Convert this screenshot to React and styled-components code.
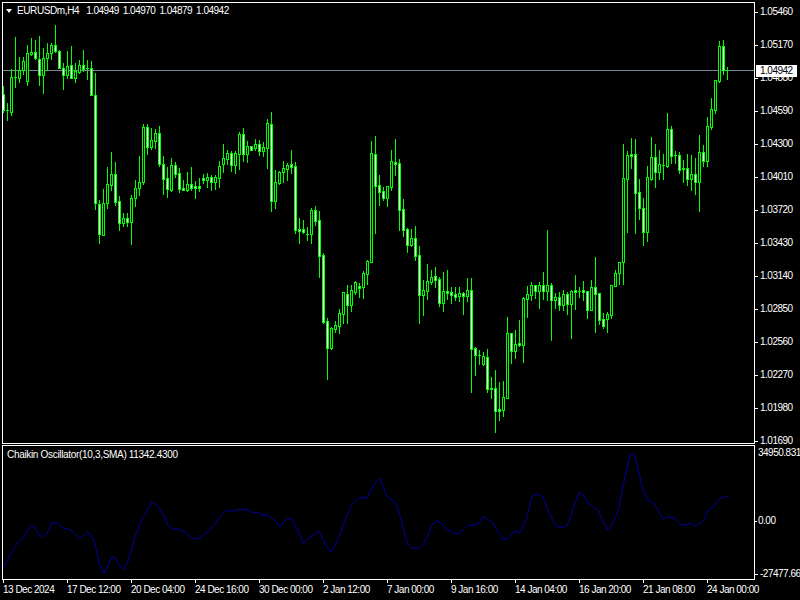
import React from "react";
import styled, { createGlobalStyle } from "styled-components";

// [high, bodyTop, bodyBottom, low, filled] in page pixels, one bar every 4px from x=3
const BARS = [
  [86,94,110,112,1],[103,110,110,120,0],[69,77,112,115,0],[37,77,77,87,0],[57,70,78,82,0],[57,61,70,74,0],
  [45,53,81,85,0],[38,52,54,55,0],[40,52,58,59,1],[36,59,75,85,1],[48,58,75,93,0],[43,53,58,70,0],
  [43,45,53,59,0],[25,45,51,52,1],[50,51,68,68,1],[63,68,75,89,1],[51,66,75,78,0],[46,65,78,78,1],
  [63,71,78,82,0],[60,65,72,73,0],[50,65,69,71,1],[60,68,68,79,0],[61,68,95,95,1],[73,95,203,209,1],
  [200,204,234,243,1],[189,203,235,235,0],[167,184,203,208,0],[152,174,185,190,0],[162,174,202,205,1],
  [196,201,223,230,1],[213,218,223,226,0],[213,218,222,226,1],[195,198,222,244,0],[180,188,198,206,0],
  [156,182,188,195,0],[124,127,182,184,0],[124,127,147,154,1],[128,140,147,149,0],[129,133,141,148,0],
  [126,133,164,166,1],[156,164,179,194,1],[167,178,189,197,1],[158,165,190,191,0],[162,165,174,177,1],
  [168,173,189,192,1],[180,188,190,190,1],[172,184,190,191,0],[167,184,188,190,1],[181,186,188,198,1],
  [178,186,188,191,1],[174,178,180,183,1],[173,177,180,187,0],[175,177,182,190,1],[175,177,182,189,0],
  [161,166,178,187,0],[144,158,164,172,0],[150,153,159,164,0],[151,153,165,171,1],[151,153,165,173,0],
  [132,134,154,169,0],[128,134,154,161,1],[141,146,154,162,0],[146,146,150,150,1],[139,144,148,150,0],
  [140,144,151,155,1],[142,147,151,156,0],[119,123,148,168,0],[112,124,201,211,1],[170,182,201,208,0],
  [171,172,183,184,0],[161,168,172,182,0],[163,165,169,180,0],[150,164,167,173,1],[162,166,230,233,1],
  [218,229,231,243,1],[220,229,232,233,1],[227,234,234,240,0],[208,210,234,243,0],[206,210,221,225,1],
  [211,220,256,277,1],[253,255,322,323,1],[318,321,348,379,1],[327,328,348,349,0],[321,325,329,332,0],
  [309,313,326,333,0],[292,292,314,323,0],[285,294,305,323,1],[285,290,305,311,0],[281,282,292,294,0],
  [283,286,288,297,1],[271,273,287,298,0],[260,261,274,284,0],[141,153,262,262,0],[136,154,186,233,1],
  [175,185,192,205,1],[187,191,198,200,1],[186,186,198,206,0],[150,161,187,190,0],[139,162,164,175,1],
  [159,163,210,230,1],[199,209,230,236,1],[228,229,245,252,1],[229,238,245,246,0],[226,238,256,260,1],
  [246,255,295,323,1],[280,290,295,315,0],[264,281,291,299,0],[270,277,282,284,0],[267,276,280,287,1],
  [277,279,303,306,1],[272,291,303,311,0],[270,291,293,299,1],[287,292,295,303,1],[287,294,297,300,1],
  [287,293,296,301,0],[292,293,296,314,1],[278,290,296,301,0],[278,290,349,392,1],[347,348,355,375,1],
  [350,355,355,364,0],[352,356,364,365,0],[349,357,389,392,1],[377,388,389,398,0],[370,388,411,432,1],
  [382,409,411,420,1],[381,397,410,416,0],[317,333,398,398,0],[333,333,351,363,1],[330,344,351,358,0],
  [320,343,345,346,1],[297,298,345,362,0],[286,294,299,317,0],[282,285,295,300,0],[285,285,291,298,1],
  [282,285,291,308,0],[272,285,291,299,1],[230,285,291,300,0],[283,285,300,340,1],[293,297,300,308,0],
  [292,297,305,310,1],[290,294,305,310,0],[292,294,304,314,1],[290,291,304,338,0],[275,290,292,309,1],
  [287,291,291,297,0],[281,290,292,300,1],[291,291,310,318,1],[280,287,310,310,0],[257,287,294,332,1],
  [293,293,320,324,1],[313,319,326,328,1],[312,314,319,332,0],[285,285,315,318,0],[270,273,286,286,0],
  [262,262,273,284,0],[144,178,262,284,0],[151,155,179,232,0],[138,154,156,168,1],[139,154,193,233,1],
  [179,192,208,219,1],[198,208,232,245,1],[166,177,232,241,0],[137,157,179,180,0],[144,157,172,187,1],
  [150,164,172,179,0],[154,165,165,179,0],[113,129,166,167,0],[126,129,156,163,1],[151,155,155,163,0],
  [152,155,170,173,1],[160,168,169,182,1],[154,168,179,185,1],[155,174,179,190,0],[158,174,182,194,1],
  [135,152,182,211,0],[145,152,161,166,1],[117,126,161,166,0],[98,109,127,129,0],[80,80,110,113,0],
  [41,46,81,82,0],[40,46,70,74,1],[67,70,70,79,0],
];

// oscillator line, traced per stretch: x offset + x/3, 440 + y/3
const traced = (left, points) =>
  points.map(([x, y]) => `${(left + x / 3).toFixed(1)},${(440 + y / 3).toFixed(1)}`);

const OSCILLATOR = [
  ...traced(0, [[10,385],[25,355],[40,328],[55,305],[70,295],[82,272],[95,257],[105,262],[118,285],[128,290],[142,280],[155,248],[170,248],[190,265],[205,266],[220,277],[238,296],[250,287],[262,277],[272,282],[285,310],[297,370],[312,400],[325,375],[335,352],[345,352],[358,378],[370,388],[384,365],[405,290],[425,240],[440,215],[456,186],[470,195],[490,225],[505,258],[520,267],[540,268],[560,280],[577,295],[597,296],[612,282],[625,275],[640,258],[660,230],[680,210],[695,214],[715,209],[745,209],[757,218],[770,216],[795,229]]),
  ...traced(265, [[0,225],[5,222],[20,235],[32,243],[44,260],[68,235],[80,235],[95,265],[115,310],[135,293],[162,274],[170,290],[187,325],[200,335],[220,295],[240,240],[260,195],[285,172],[305,175],[320,145],[335,122],[345,118],[365,168],[385,183],[395,195],[410,245],[427,310],[442,325],[462,325],[475,312],[490,285],[500,255],[515,243],[530,250],[545,268],[560,273],[575,283],[585,280],[607,256],[625,255],[642,250],[655,229],[682,247],[700,278],[717,300],[730,295],[750,272],[765,280],[785,235],[800,170]]),
  ...traced(530, [[8,168],[22,162],[38,170],[50,200],[75,255],[90,262],[110,258],[148,158],[160,165],[175,190],[190,200],[205,212],[220,245],[233,270],[245,258],[265,210],[285,110],[300,45],[312,42],[320,70],[340,155],[355,180],[372,190],[400,238],[415,230],[435,235],[450,254],[470,254],[482,250],[497,259],[520,242],[535,210],[550,200],[570,175],[592,169]]),
].join(" ");

const PRICES = ["1.05460","1.05170","1.04880","1.04590","1.04300","1.04010","1.03720","1.03430","1.03140","1.02850","1.02560","1.02270","1.01980","1.01690"];
const TIMES = ["13 Dec 2024","17 Dec 12:00","20 Dec 04:00","24 Dec 16:00","30 Dec 00:00","2 Jan 12:00","7 Jan 00:00","9 Jan 16:00","14 Jan 04:00","16 Jan 20:00","21 Jan 08:00","24 Jan 00:00"];
const QUOTES = ["1.04949","1.04970","1.04879","1.04942"];

const GlobalStyle = createGlobalStyle`
  html, body {
    margin: 0;
    background: #000;
    overflow: hidden;
  }
  body {
    font-family: "Liberation Sans", Arial, sans-serif;
    font-size: 10px;
    letter-spacing: -0.5px;
    line-height: 12px;
    color: #fff;
  }
`;

const Terminal = styled.div`
  width: 800px;
  height: 600px;
  box-sizing: border-box;
  padding: 2px 0 0 2px;
  background: #000;
  overflow: hidden;
`;

const Pane = styled.section`
  display: flex;
  height: ${(p) => p.$height}px;
  margin-bottom: ${(p) => p.$after || 0}px;
`;

const Frame = styled.div`
  position: relative;
  flex: none;
  box-sizing: border-box;
  width: 753px;
  height: 100%;
  border: 1px solid #fff;
  overflow: hidden;
`;

const Plot = styled.svg`
  display: block;
`;

const ChartHeader = styled.div`
  position: absolute;
  top: 2px;
  left: 3px;
  display: flex;
  align-items: center;
  white-space: nowrap;
`;

const MenuArrow = styled.span`
  width: 0;
  height: 0;
  margin-right: 5px;
  border-style: solid;
  border-width: 4px 3.5px 0;
  border-color: #fff transparent transparent;
`;

const Symbol = styled.span`
  margin-right: 7px;
  letter-spacing: -0.4px;
`;

const Quotes = styled.span`
  display: flex;
  gap: 4px;
`;

const IndicatorTitle = styled.div`
  position: absolute;
  top: 3px;
  left: 4px;
  letter-spacing: -0.32px;
  white-space: nowrap;
`;

const PriceAxis = styled.div`
  position: relative;
  display: flex;
  flex-direction: column;
  gap: 21px;
  padding-top: 4px;
`;

const AxisRow = styled.div`
  display: flex;
  align-items: center;
  height: 12px;
  white-space: nowrap;
`;

const Tick = styled.i`
  flex: none;
  width: 3px;
  height: 1px;
  margin-right: 2px;
  background: #fff;
`;

const LastPrice = styled.div`
  position: absolute;
  top: 63px;
  left: 1px;
  box-sizing: border-box;
  width: 41px;
  height: 12px;
  padding-left: 4px;
  background: #fff;
  color: #000;
`;

const ScaleAxis = styled.div`
  display: flex;
  flex-direction: column;
  width: 45px;
  overflow: hidden;
`;

const ScaleRow = styled(AxisRow)`
  margin-top: ${(p) => p.$offset}px;
`;

const ScaleTick = styled.i`
  flex: none;
  width: ${(p) => p.$width}px;
  height: 1px;
  margin-right: 1px;
  background: #fff;
`;

const ScaleValue = styled.span`
  margin-left: ${(p) => p.$shift || 0}px;
`;

const TimeAxis = styled.div`
  display: flex;
  margin-left: 1px;
`;

const TimeCell = styled.div`
  flex: none;
  width: 64px;
  white-space: nowrap;
`;

const TimeTick = styled.i`
  display: block;
  width: 1px;
  height: 3px;
  margin-bottom: 1px;
  background: #fff;
`;

const Candle = ({ bar, x }) => {
  const [high, top, bottom, low, filled] = bar;
  return (
    <g>
      <rect x={x} y={high} width={1} height={low - high + 1} fill="#00ff00" />
      <rect x={x - 1} y={top} width={3} height={bottom - top + 1} fill="#00ff00" />
      {bottom - top > 1 && (
        <rect x={x} y={top + 1} width={1} height={bottom - top - 1} fill={filled ? "#fff" : "#000"} />
      )}
    </g>
  );
};

const App = () => (
  <Terminal>
    <GlobalStyle />
    <Pane $height={442} $after={1}>
      <Frame>
        <Plot width="751" height="440" viewBox="3 3 751 440" shapeRendering="crispEdges">
          <rect x="3" y="70" width="751" height="1" fill="#778899" />
          {BARS.map((bar, i) => (
            <Candle key={i} bar={bar} x={3 + i * 4} />
          ))}
        </Plot>
        <ChartHeader>
          <MenuArrow />
          <Symbol>EURUSDm,H4</Symbol>
          <Quotes>
            {QUOTES.map((q, i) => (
              <span key={i}>{q}</span>
            ))}
          </Quotes>
        </ChartHeader>
      </Frame>
      <PriceAxis>
        {PRICES.map((price) => (
          <AxisRow key={price}>
            <Tick />
            {price}
          </AxisRow>
        ))}
        <LastPrice>1.04942</LastPrice>
      </PriceAxis>
    </Pane>
    <Pane $height={135}>
      <Frame>
        <Plot width="751" height="133" viewBox="3 446 751 133">
          <polyline points={OSCILLATOR} fill="none" stroke="#0000b0" strokeWidth="0.9" />
        </Plot>
        <IndicatorTitle>Chaikin Oscillator(10,3,SMA) 11342.4300</IndicatorTitle>
      </Frame>
      <ScaleAxis>
        <ScaleRow $offset={2}>
          <ScaleValue $shift={3}>34950.831</ScaleValue>
        </ScaleRow>
        <ScaleRow $offset={56}>
          <ScaleTick $width={2} />
          0.00
        </ScaleRow>
        <ScaleRow $offset={41}>
          <ScaleTick $width={3} />
          <ScaleValue $shift={1}>-27477.660</ScaleValue>
        </ScaleRow>
      </ScaleAxis>
    </Pane>
    <TimeAxis>
      {TIMES.map((time) => (
        <TimeCell key={time}>
          <TimeTick />
          {time}
        </TimeCell>
      ))}
    </TimeAxis>
  </Terminal>
);

export default App;
